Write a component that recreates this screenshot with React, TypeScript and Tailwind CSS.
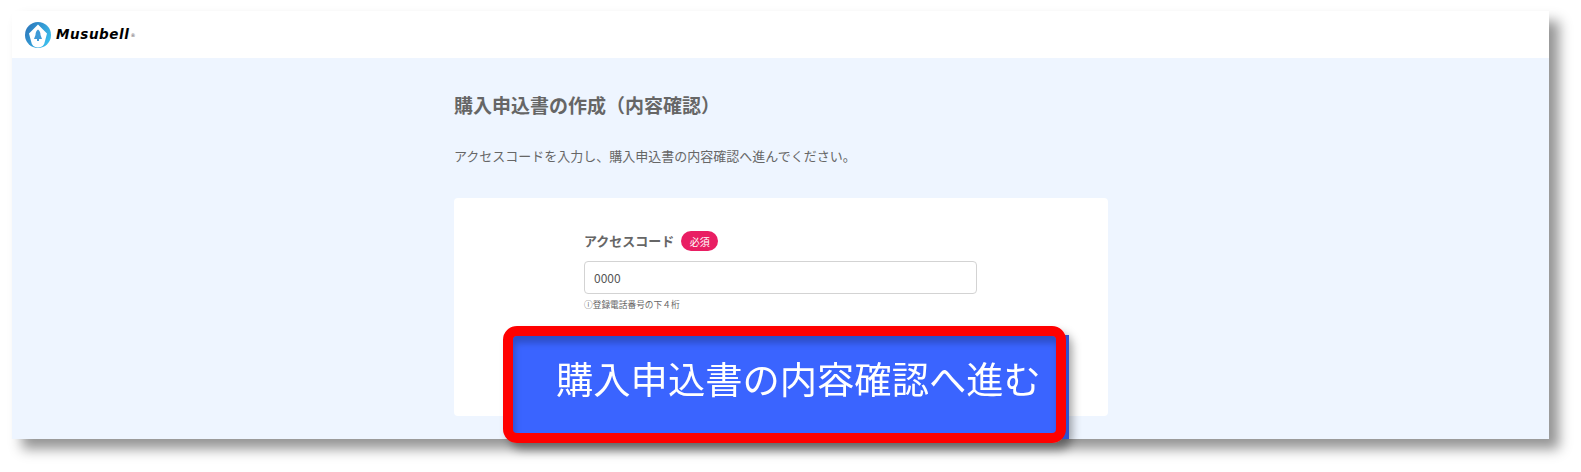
import React from "react";

const cjk = "font-['Noto_Sans_CJK_JP','Noto_Sans',sans-serif]";

const Logo = () => (
  <svg width="26" height="26" viewBox="0 0 26 26">
    <defs>
      <linearGradient id="logoBlue" x1="0" y1="0" x2="1" y2="0.6">
        <stop offset="0" stopColor="#2a6fb5" />
        <stop offset="1" stopColor="#3abcec" />
      </linearGradient>
    </defs>
    <circle cx="13" cy="13" r="13" fill="url(#logoBlue)" />
    <path d="M13 2.5 L22 11.5 L20 19 Q19 25.5 13 25.5 Q7 25.5 6 19 L4 11.5 Z" fill="#fff" />
    <path d="M13 7.5 Q15.5 9 15.5 13 L17 17 H9 L10.5 13 Q10.5 9 13 7.5 Z" fill="#3f9ad6" />
    <rect x="12" y="17" width="2" height="2" fill="#3f9ad6" />
  </svg>
);

export default function App() {
  return (
    <div className={`h-[472px] w-[1581px] overflow-hidden bg-white pt-[11px] pl-[12px] ${cjk}`}>
      <div className="relative flex h-[428px] w-[1537px] flex-col bg-[#eef5ff] shadow-[10px_10px_12px_rgba(0,0,0,0.42)]">
        {/* Header */}
        <header className="flex h-[47px] items-center gap-[5px] bg-white pl-[13px]">
          <Logo />
          <span className="font-['DejaVu_Sans',sans-serif] text-[13.5px] font-bold tracking-[0.6px] text-black italic">
            Musubell
            <sup className="ml-[1px] text-[5px] font-normal text-[#555555]">®</sup>
          </span>
        </header>

        {/* Main */}
        <main className="ml-[442px] w-[654px] text-[#666666]">
          <h1 className="mt-[33px] text-[19px] leading-[27px] font-bold">購入申込書の作成（内容確認）</h1>
          <p className="mt-[27px] text-[13px] leading-[22px]">
            アクセスコードを入力し、購入申込書の内容確認へ進んでください。
          </p>

          <div className="mt-[31px] h-[218px] rounded-[4px] bg-white pt-[33px] pl-[130px]">
            <div className="flex items-center gap-[7px]">
              <span className="text-[13px] leading-[20px] font-bold">アクセスコード</span>
              <span className="flex h-[20px] w-[37px] items-center justify-center rounded-full bg-[#e91e63] text-[10px] text-white">
                必須
              </span>
            </div>
            <div className="mt-[10px] flex h-[33px] w-[393px] items-center rounded-[4px] border border-[#d3d3d3] bg-white pl-[9px] text-[12px] text-[#555555]">
              0000
            </div>
            <p className="mt-[4px] text-[8.7px] leading-[14px]">ⓘ登録電話番号の下４桁</p>
          </div>
        </main>

        {/* Highlighted button */}
        <div className="absolute top-[315px] left-[491px] h-[117px] w-[563px] rounded-[14px] shadow-[6px_7px_10px_rgba(0,0,0,0.38)]" />
        <div className="absolute top-[324px] left-[497px] h-[104px] w-[560px] bg-[#2f52cf]" />
        <div className="absolute top-[315px] left-[491px] flex h-[117px] w-[563px] items-center overflow-hidden rounded-[14px] border-[10px] border-[#ff0000] bg-[#3a64ff] pb-[12px] pl-[43px] shadow-[inset_2px_7px_6px_rgba(0,0,0,0.22)]">
          <span className="text-[37.3px] leading-none font-normal whitespace-nowrap text-white blur-[0.4px]">
            購入申込書の内容確認へ進む
          </span>
        </div>
      </div>
    </div>
  );
}
